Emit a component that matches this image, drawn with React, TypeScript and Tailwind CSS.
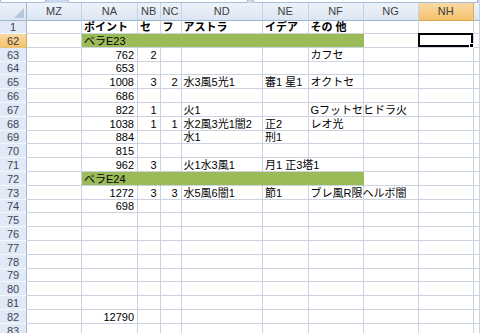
import React from "react";

const COLS = "grid-cols-[27px_55px_56px_22.5px_21px_81.5px_45.5px_55px_55px_55.5px_1fr]";

type Row = {
  n: string;
  c?: (string | undefined)[];
  green?: string;
  bold?: boolean;
  sel?: boolean;
};

const rows: Row[] = [
  { n: "1", bold: true, c: [undefined, "ポイント", "セ", "フ", "アストラ", "イデア", "その 他"] },
  { n: "62", green: "ベラE23", sel: true },
  { n: "63", c: [undefined, "762", "2", undefined, undefined, undefined, "カフセ"] },
  { n: "64", c: [undefined, "653"] },
  { n: "65", c: [undefined, "1008", "3", "2", "水3風5光1", "審1 星1", "オクトセ"] },
  { n: "66", c: [undefined, "686"] },
  { n: "67", c: [undefined, "822", "1", undefined, "火1", undefined, "Gフットセヒドラ火"] },
  { n: "68", c: [undefined, "1038", "1", "1", "水2風3光1闇2", "正2", "レオ光"] },
  { n: "69", c: [undefined, "884", undefined, undefined, "水1", "刑1"] },
  { n: "70", c: [undefined, "815"] },
  { n: "71", c: [undefined, "962", "3", undefined, "火1水3風1", "月1 正3塔1"] },
  { n: "72", green: "ベラE24" },
  { n: "73", c: [undefined, "1272", "3", "3", "水5風6闇1", "節1", "ブレ風R限ヘルボ闇"] },
  { n: "74", c: [undefined, "698"] },
  { n: "75" },
  { n: "76" },
  { n: "77" },
  { n: "78" },
  { n: "79" },
  { n: "80" },
  { n: "81" },
  { n: "82", c: [undefined, "12790"] },
  { n: "83" },
];

const headers = ["MZ", "NA", "NB", "NC", "ND", "NE", "NF", "NG", "NH", ""];

const isNum = (s: string) => /^\d+$/.test(s);

export default function App() {
  return (
    <div
      className="w-[480px] h-[333px] overflow-hidden bg-white text-[11px] text-black"
      style={{ fontFamily: '"Liberation Sans", "Noto Sans CJK JP", sans-serif' }}
    >
      {/* top strip */}
      <div className="h-[3px] bg-[#c9d8ec] flex gap-[5px] overflow-hidden">
        <div className="w-[46px] h-[6px] -mt-[3px] bg-white border border-[#a9bdd6] rounded-[2px]" />
        <div className="w-[180px] h-[6px] -mt-[3px] ml-[17px] bg-white border border-[#a9bdd6] rounded-[2px]" />
        <div className="w-[225px] h-[6px] -mt-[3px] bg-white border border-[#a9bdd6] rounded-[2px]" />
      </div>
      {/* column headers */}
      <div className={`grid ${COLS} h-[18px]`}>
        <div className="relative bg-gradient-to-b from-[#eef3fa] to-[#dbe5f2] border-r border-b border-[#9eb6ce]">
          <svg className="absolute right-[2px] bottom-[2px]" width="10" height="10" viewBox="0 0 10 10">
            <polygon points="10,0 10,10 0,10" fill="#b4c6dc" />
          </svg>
        </div>
        {headers.map((h, i) => (
          <div
            key={i}
            className={`flex items-center justify-center border-r border-b leading-none ${
              h === "NH"
                ? "bg-gradient-to-b from-[#f9d9a2] to-[#f3c26c] border-r-[#e0b060] border-b-[#d9a84f] text-[#3a3a3a]"
                : "bg-gradient-to-b from-[#eef3fa] to-[#dbe5f2] border-r-[#c3d2e4] border-b-[#9eb6ce] text-[#3f3f3f]"
            }`}
          >
            {h}
          </div>
        ))}
      </div>
      {/* rows */}
      {rows.map((r, ri) => (
        <div key={ri} className={`grid ${COLS} ${ri === 0 ? "h-[13px]" : "h-[13.8px]"}`}>
          <div
            className={`flex items-end justify-center leading-[12px] border-r border-b ${
              r.sel
                ? "bg-gradient-to-b from-[#f9d9a2] to-[#f3c26c] border-r-[#d9a84f] border-b-[#e7c07c] text-[#3a3a3a]"
                : "bg-[#e0e9f5] border-r-[#9eb6ce] border-b-[#f4f7fb] text-[#3a4658]"
            }`}
          >
            {r.n}
          </div>
          {Array.from({ length: 10 }).map((_, ci) => {
            const inGreen = r.green !== undefined && ci >= 1 && ci <= 6;
            const val = r.green !== undefined ? (ci === 1 ? r.green : undefined) : r.c?.[ci];
            const num = val !== undefined && isNum(val);
            return (
              <div
                key={ci}
                className={`relative flex items-end leading-[12px] whitespace-nowrap border-b ${
                  inGreen
                    ? "bg-[#9bbb59] border-r border-r-[#9bbb59] border-b-[#ccd3e0]"
                    : "border-r border-[#ccd3e0]"
                } ${num ? "justify-end pr-[3px]" : "justify-start pl-[2px]"} ${r.bold ? "font-bold" : ""}`}
              >
                {val !== undefined && <span className="relative z-10">{val}</span>}
                {r.sel && ci === 8 && (
                  <div className="absolute -left-[1px] -top-[1px] right-0 bottom-0 border-2 border-black z-20">
                    <div className="absolute -right-[3px] -bottom-[3px] w-[5px] h-[5px] bg-black border border-white" />
                  </div>
                )}
              </div>
            );
          })}
        </div>
      ))}
    </div>
  );
}
